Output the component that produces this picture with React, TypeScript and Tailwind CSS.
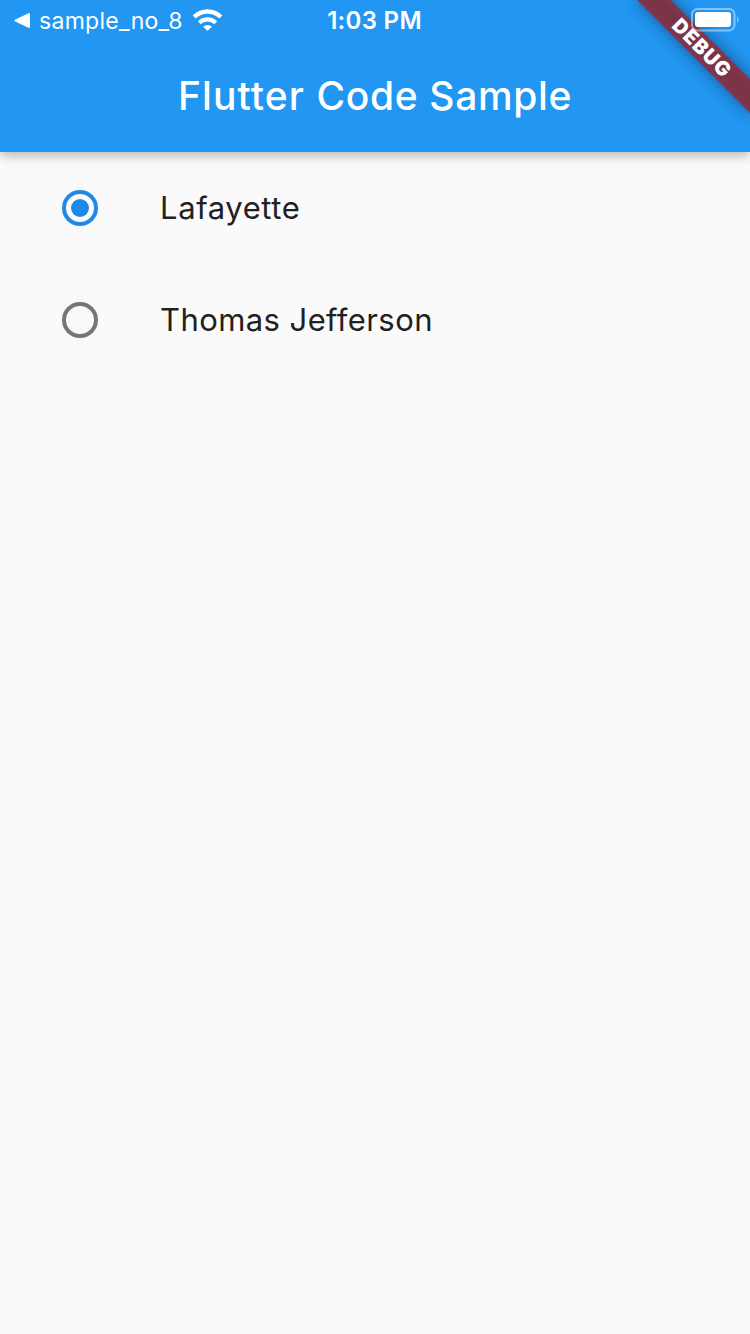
import { useState } from 'react';

const options = [
  { name: 'Lafayette', tracking: 'tracking-[0.6px]' },
  { name: 'Thomas Jefferson', tracking: 'tracking-[0.42px]' },
];

function WifiIcon() {
  return (
    <svg className="ml-[9px] h-[23px] w-[31px]" viewBox="0 0 31 23" fill="none" stroke="#fff">
      <path d="M2.2 8A19 19 0 0 1 28.8 8" strokeWidth="4.4" />
      <path d="M7.2 13.8A12 12 0 0 1 23.8 13.8" strokeWidth="4.2" />
      <path d="M15.5 22L11 17.6Q15.5 14.2 20 17.6Z" fill="#fff" stroke="none" />
    </svg>
  );
}

function BatteryIcon() {
  return (
    <svg className="h-6 w-[48px]" viewBox="0 0 48 24" fill="none">
      <rect x="1" y="1" width="42.5" height="21.5" rx="5.5" stroke="#fff" strokeOpacity=".45" strokeWidth="2" />
      <rect x="4" y="4" width="36" height="15" rx="3" fill="#fff" />
      <path d="M46 8Q47.7 9.5 47.7 11.5T46 15Z" fill="#fff" fillOpacity=".45" />
    </svg>
  );
}

function StatusBar() {
  return (
    <div className="relative z-20 grid h-10 grid-cols-[300px_149px_301px] items-center text-white">
      <div className="flex items-center pl-[14px]">
        <svg className="h-[15px] w-4" viewBox="0 0 16 15" fill="#fff">
          <path d="M15 0Q16 0 16 1V14Q16 15 15 15L.8 8.2Q0 7.5 .8 6.8Z" />
        </svg>
        <span className="ml-[9px] pt-0.5 text-[23px] leading-[38px] tracking-[0.3px]">sample_no_8</span>
        <WifiIcon />
      </div>
      <div className="pt-0.5 text-center text-[24px] leading-[38px] font-semibold tracking-[0.3px]">1:03 PM</div>
      <div className="flex justify-end pr-[11px]">
        <BatteryIcon />
      </div>
    </div>
  );
}

function DebugBanner() {
  return (
    <div className="absolute top-0 right-0 z-10 h-[170px] w-[170px] overflow-hidden">
      <div className="absolute top-[36px] left-[42px] h-6 w-[160px] rotate-45 bg-linear-to-b from-[#803650] via-[#783244] to-[#803650] text-center text-[20px] leading-6 font-black tracking-[0.9px] text-white shadow-[0_0_16px_rgba(0,0,0,0.42)]">
        DEBUG
      </div>
    </div>
  );
}

export default function App() {
  const [selected, setSelected] = useState(options[0].name);
  return (
    <div className="relative h-[1334px] w-[750px] overflow-hidden bg-[#fafafa] font-['Inter',sans-serif]">
      <div className="absolute top-0 right-0 left-0 z-20">
        <StatusBar />
      </div>
      <header className="h-[152px] bg-[#2196f3] pt-10 shadow-[0_4px_8px_-2px_rgba(0,0,0,0.12),0_6px_10px_rgba(0,0,0,0.1),0_2px_16px_rgba(0,0,0,0.08)]">
        <h1 className="flex h-28 items-center justify-center pt-px text-[39px] font-medium tracking-[0.65px] whitespace-pre text-white">
          <span className="tracking-[1.1px]">Flutter </span>
          <span>Code Sample</span>
        </h1>
      </header>
      <main>
        {options.map(({ name, tracking }) => (
          <div key={name} className="flex h-28 items-center pl-[62px]" onClick={() => setSelected(name)}>
            <span
              className={
                'flex h-9 w-9 items-center justify-center rounded-full border-4 ' +
                (selected === name ? 'border-[#1e88e5]' : 'border-[#757575]')
              }
            >
              {selected === name && <span className="h-[18px] w-[18px] rounded-full bg-[#1e88e5]" />}
            </span>
            <span className={'ml-[62px] text-[31px] leading-[46px] text-[#212121] ' + tracking}>{name}</span>
          </div>
        ))}
      </main>
      <DebugBanner />
    </div>
  );
}
